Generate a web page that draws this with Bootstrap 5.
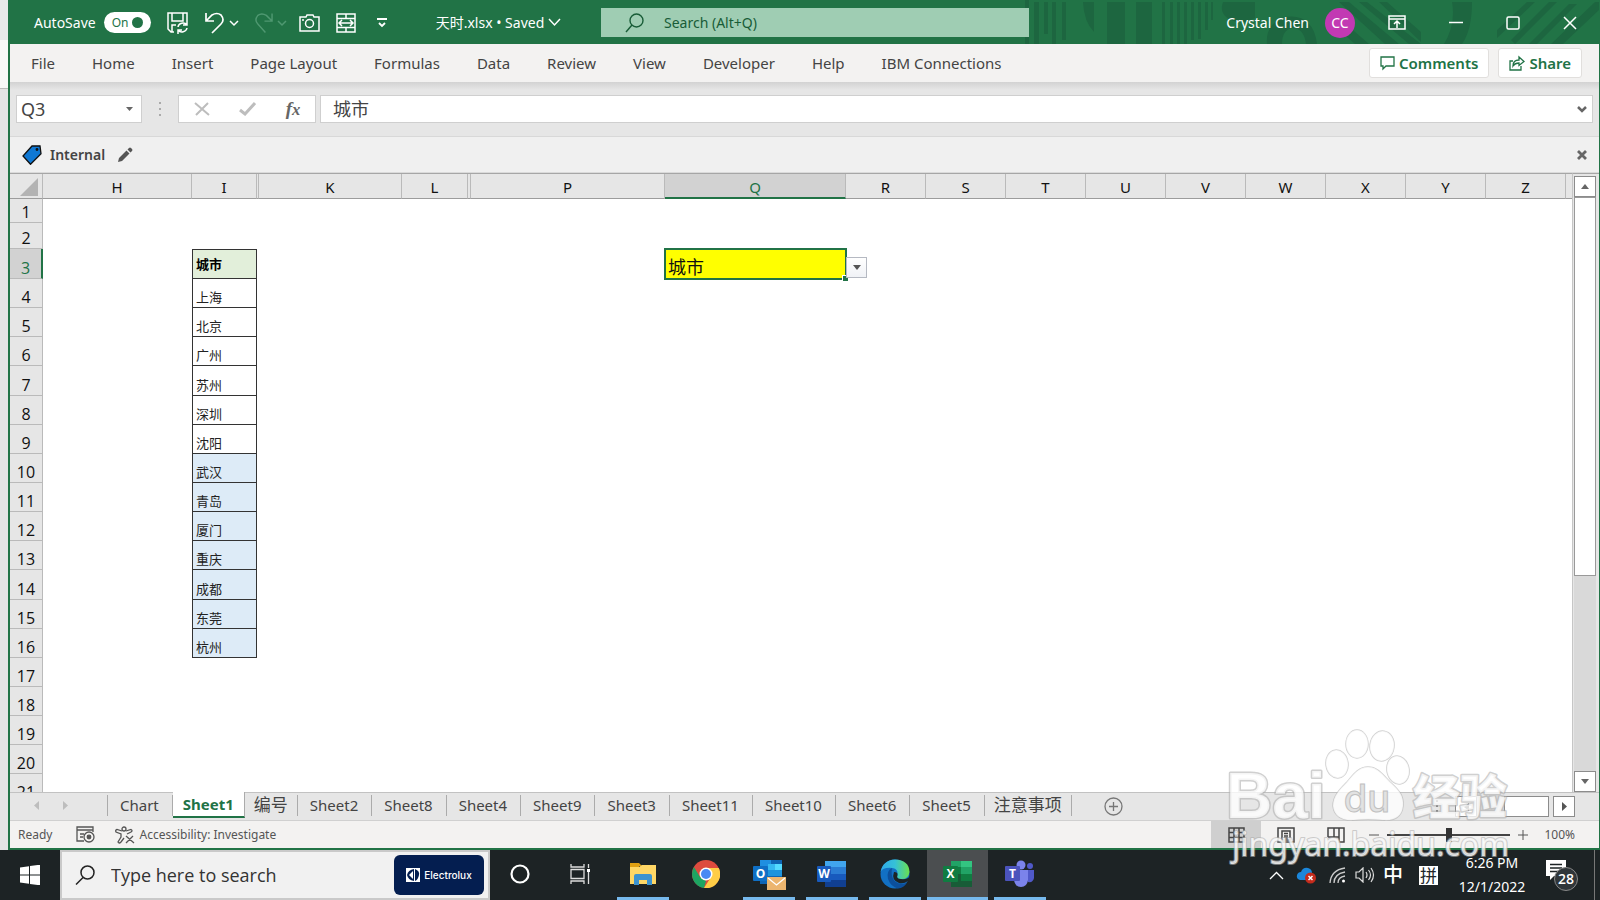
<!DOCTYPE html>
<html lang="en">
<head>
<meta charset="utf-8">
<meta name="viewport" content="width=device-width, initial-scale=1">
<title>天时.xlsx - Excel</title>
<link href="https://cdn.jsdelivr.net/npm/bootstrap@5.3.0/dist/css/bootstrap.min.css" rel="stylesheet">
<style>
:root{--xl:#217346;--ink:#444;--face:#e6e6e6}
body{font-family:"Noto Sans","Noto Sans CJK SC",sans-serif;font-size:15px;line-height:20px;color:var(--ink);background:#e4e4e4}
button,input{font:inherit;color:inherit}
button{background:none;border:0;padding:0;line-height:0}
svg{display:block;flex:none}
a{color:inherit;text-decoration:none}
.behind{width:8px;background:linear-gradient(#e9e9e9 0 40px,#f8f8f8 40px 88px,#bbb 88px 89px,#e4e4e4 89px)}
.xl-window{border:solid var(--xl);border-width:0 1px 2px 2px}
/* title bar */
.titlebar{height:44px;background:var(--xl);color:#fff;font-size:14px}
.titlebar .pattern{right:0;top:0;width:580px;height:44px}
.titlebar>.layer{z-index:1;padding-top:1px}
.quick{width:591px}
.quick .more{margin-left:20px}
.autosave{width:47px;height:21px;border-radius:11px;background:#fff;color:var(--xl);font-size:12px;line-height:21px}
.autosave i{width:11px;height:11px;border-radius:50%;background:var(--xl)}
.find{width:428px;height:29px;background:#9fcdb3;color:#185c37}
.find input,.task-find input,.formula input{background:none;border:0;outline:0;padding:0}
.find input::placeholder{color:#185c37;opacity:1}
.avatar{width:30px;height:30px;border-radius:50%;background:#c239b3}
.controls{gap:43px;margin-left:33px;padding-right:22px}
/* ribbon */
.ribbon{height:38px;background:#f3f2f1;padding:0 17px 0 3px;column-gap:1px}
.ribbon .tab{padding:0 18px}
.ribbon .action{height:30px;background:#fff;border:1px solid #e1dfdd;border-radius:3px;color:var(--xl);font-weight:600;line-height:20px;padding:0 10px}
/* formula bar */
.formula{height:54px;background:linear-gradient(#d2d2d2,#e6e6e6 8px);padding:0 6px;font-size:18px}
.formula .box{height:28px;background:#fff;border:1px solid #cfcfcf}
.fx{font:italic 700 19px/24px "Liberation Serif",serif;color:#666}
.label-bar{height:37px;background:#f0f0f0;border-top:1px solid #d8d8d8;border-bottom:1px solid #dadada;font-weight:600;font-size:14px}
/* grid */
.sheet-pane{background:#fff;border-top:1px solid #a6a6a6;border-right:1px solid #c6c6c6}
.cells{table-layout:fixed;border-collapse:separate;border-spacing:0;width:1563px;color:#111}
.cells th,.cells td{padding:0;overflow:hidden;white-space:nowrap}
.cells th{background:var(--face);font-weight:400;text-align:center;font-size:16px;border-right:1px solid #bababa;border-bottom:1px solid #bababa}
.cells thead th{height:25px;border-bottom-color:#9c9c9c;font-size:15px;padding-top:2px}
.cells tbody th{vertical-align:bottom;line-height:20px;font-family:"Open Sans",sans-serif}
.cells tbody tr{height:29px}
.cells tbody tr.r-first{height:24px}
.cells tbody tr.r-second{height:26px}
.cells tbody tr.r-tall{height:30px}
.cells thead .picked{background:#d2d2d2;color:var(--xl);border-bottom:2px solid var(--xl)}
.cells tbody .picked{background:#d2d2d2;color:var(--xl);border-right:2px solid var(--xl)}
.cells .city{font-size:13px;line-height:20px;vertical-align:bottom;padding-left:3px;border:solid #333;border-width:0 1px 1px;color:#222}
.cells .city-head{background:#e2efda;font-weight:700;border-top-width:1px;vertical-align:middle;color:#000}
.cells .tint{background:#ddebf7}
.cells .active-cell{background:#ff0;outline:2px solid var(--xl);outline-offset:-1px;font-size:18px;line-height:24px;padding-left:3px;vertical-align:bottom;overflow:visible;position:relative}
.handle{right:-2px;bottom:-2px;width:6px;height:6px;background:var(--xl);border:solid #fff;border-width:1px 0 0 1px}
.drop{left:100%;top:8px;width:21px;height:21px;background:linear-gradient(#fff,#f0f2f6);border:1px solid #b5b9c2}
.vscroll{width:26px;background:#e6e6e6;border-top:1px solid #a6a6a6;padding:2px 3px 0 1px}
.arrow-btn{width:22px;height:21px;background:#fff;border:1px solid #8c8c8c}
.vtrack{background:#d9d9d9}
.vthumb{height:66%;background:#fff;border:1px solid #999}
/* sheet tabs */
.tabs{height:29px;background:var(--face);border-top:1px solid #c2c2c2;border-bottom:1px solid #d0d0d0}
.tabs .sheet{padding:0 13px 0 12px;height:21px;line-height:20px;margin-top:2px;border-right:1px solid #ababab;white-space:nowrap}
.tabs .sheet.cjk{padding:0 9px;font-size:17px}
.tabs .sheet.active{height:26px;line-height:24px;margin-top:-1px;background:#fff;border-bottom:2px solid var(--xl);font-weight:700;color:var(--xl);padding:0 10px}
.tabs .lead-in{width:98px;height:21px;margin-top:2px;border-right:1px solid #ababab}
.status{height:27px;background:#f3f2f1;font-size:12px;color:#555}
.view-btn{width:50px;height:27px}
.view-btn.on{background:#cfcfcf}
.zoom-range{-webkit-appearance:none;appearance:none;width:123px;height:16px;background:linear-gradient(#444,#444) center/100% 2px no-repeat}
.zoom-range::-webkit-slider-thumb{-webkit-appearance:none;width:6px;height:14px;background:#333}
/* taskbar */
.taskbar{height:50px;background:#1d2325;color:#fff}
.start{width:60px}
.task-find{width:430px;background:#f1f1f1;border:2px solid #c9c9c9;color:#222;font:18px/24px "Open Sans",sans-serif;padding-left:13px}
.task-find input::placeholder{color:#333;opacity:1}
.brand-chip{width:90px;height:40px;border-radius:6px;background:#041e50;color:#fff;font:500 10px/14px Inter,sans-serif}
.app{width:52px;border-bottom:3px solid transparent;margin-left:11px}
.app.open{border-color:#76b9ed}
.app.front{width:61px;background:#4b4e50}
.app.front,.front+.app{margin-left:6px}
.ime{font-size:20px;font-weight:500}
.ime-mode{font-size:17px;width:19px;line-height:19px}
.clock{font-size:14px;line-height:24px;width:76px}
.show-desk{width:6px;border-left:1px solid #777}
/* watermark */
.stamp{right:50px;bottom:30px;width:330px;height:150px;pointer-events:none;z-index:5}
</style>
</head>
<body>
<div class="vh-100 d-flex flex-column overflow-hidden position-relative">
<div class="d-flex flex-grow-1" style="min-height:0">
<div class="behind flex-shrink-0"></div>
<main class="xl-window flex-grow-1 d-flex flex-column" style="min-width:0">

<header class="titlebar d-flex align-items-center position-relative flex-shrink-0">
 <svg class="pattern position-absolute" viewBox="0 0 580 44" fill="#1d6640">
  <path d="M6 0h4v44H6zM15 2h5v42h-5zM25 2h4v32h-4zM33 2h4v42h-4zM43 2h4v38h-4zM64 2h11v30Q65 22 64 2zM88 2h18v42H88zM117 2h16v42h-16zM143 2h3v42h-3zM151 2h3v42h-3zM158 2h3v42h-3zM165 2h3v42h-3zM172 2h3v38h-3zM179 2h3v37h-3zM186 2h3v28h-3zM192 2h2v18h-2z"/>
  <path d="M204 2h32v16q-14 8-26 1-10-6-6-17z"/>
  <path d="M248 44q-2-20 18-27 28-4 32 27h-11q-2-16-14-16-10 2-10 16z"/>
  <path d="M320 2h10l50 42h-14zM340 2h8l54 42h-12zM360 2h8l34 30v10zM320 18l30 26h-14l-16-14zM433 2h20q0 28-10 42h-18q12-20 8-42zM478 30l30-28h8l-38 36zM492 40l38-38h8l-42 42zM510 44l40-40h8l-40 40zM532 44l44-42h4v8l-36 34z"/>
 </svg>
 <div class="layer quick d-flex align-items-center">
  <span class="ms-4 me-2" id="as-label">AutoSave</span>
  <button class="autosave d-flex align-items-center justify-content-between px-2" role="switch" aria-checked="true" aria-labelledby="as-label">On<i></i></button>
  <button class="ms-3" aria-label="Save"><svg width="22" height="22" viewBox="0 0 22 22" fill="none" stroke="#fff" stroke-width="1.5"><path d="M7 20H4l-3-3V1h19v8M5 1v8h11V1M5 20v-7h4"/><path d="M11 15a5 4.500 0 0 1 9-2M20 9v4h-4M20 16a5 4.500 0 0 1-9 2M11 22v-4h4"/></svg></button>
  <button class="ms-3" aria-label="Undo"><svg width="20" height="22" viewBox="0 0 20 22" fill="none" stroke="#fff" stroke-width="1.700"><path d="M1 1v8h8M1 9l6-6q5-3 9 0 4 5 0 9l-9 9"/></svg></button>
  <button class="ms-1" aria-label="Undo list"><svg width="10" height="8" viewBox="0 0 10 8" fill="none" stroke="#fff" stroke-width="1.500"><path d="M1 2l4 4 4-4"/></svg></button>
  <button class="ms-3" aria-label="Redo" disabled><svg width="18" height="22" viewBox="0 0 19 22" fill="none" stroke="#4f9871" stroke-width="1.500"><path d="M18 1v8h-8M18 9l-6-6q-5-3-9 0-4 5 0 9l8 9"/></svg></button>
  <button class="ms-1" aria-label="Redo list" disabled><svg width="10" height="8" viewBox="0 0 10 8" fill="none" stroke="#4f9871" stroke-width="1.500"><path d="M1 2l4 4 4-4"/></svg></button>
  <button class="ms-2 ps-1" aria-label="Camera"><svg width="21" height="18" viewBox="0 0 21 18" fill="none" stroke="#fff" stroke-width="1.500"><path d="M1 3h6l1-2h6l1 2h5v14H1z"/><circle cx="10.500" cy="9.500" r="4"/><path d="M3 6h2"/></svg></button>
  <button class="ms-3" aria-label="Merge cells"><svg width="20" height="20" viewBox="0 0 20 20" fill="none" stroke="#fff" stroke-width="1.500"><path d="M1 1h18v18H1zM1 5.500h18M1 14.500h18M10 1v4M10 15v4M3 10h14M6 7l-3 3 3 3M14 7l3 3-3 3"/></svg></button>
  <button class="more" aria-label="Customize toolbar"><svg width="12" height="10" viewBox="0 0 12 10" fill="none" stroke="#fff" stroke-width="1.800"><path d="M1 1h10M3 5l3 3 3-3"/></svg></button>
  <button class="ms-5 d-flex align-items-center gap-1" style="line-height:20px">天时.xlsx • Saved <svg width="13" height="9" viewBox="0 0 13 9" fill="none" stroke="#fff" stroke-width="1.500"><path d="M1 1l5.500 6L12 1"/></svg></button>
 </div>
 <label class="layer find d-flex align-items-center ps-4">
  <svg width="19" height="20" viewBox="0 0 19 20" fill="none" stroke="#185c37" stroke-width="1.400"><circle cx="11.500" cy="7.500" r="6.500"/><path d="M7 12l-6 7"/></svg>
  <input class="ms-3 ps-1 flex-grow-1" type="search" placeholder="Search (Alt+Q)" aria-label="Search">
 </label>
 <div class="layer ms-auto d-flex align-items-center">
  <span class="me-3">Crystal Chen</span>
  <span class="avatar d-flex align-items-center justify-content-center">CC</span>
  <div class="controls d-flex align-items-center">
  <button aria-label="Ribbon display"><svg width="18" height="15" viewBox="0 0 18 15" fill="none" stroke="#fff" stroke-width="1.500"><path d="M1 1h16v13H1zM1 4h16M9 13V6M6 9l3-3 3 3"/></svg></button>
  <button aria-label="Minimize"><svg width="14" height="14" viewBox="0 0 14 14" stroke="#fff" stroke-width="1.500"><path d="M0 6.500h14"/></svg></button>
  <button aria-label="Maximize"><svg width="14" height="14" viewBox="0 0 14 14" fill="none" stroke="#fff" stroke-width="1.500"><rect x="1" y="1" width="12" height="12" rx="1.500"/></svg></button>
  <button aria-label="Close"><svg width="14" height="14" viewBox="0 0 14 14" stroke="#fff" stroke-width="1.500"><path d="M1 1l12 12M13 1L1 13"/></svg></button>
  </div>
 </div>
</header>

<nav class="ribbon d-flex align-items-center flex-shrink-0">
 <a class="tab" href="#">File</a><a class="tab" href="#">Home</a><a class="tab" href="#">Insert</a><a class="tab" href="#">Page Layout</a><a class="tab" href="#">Formulas</a><a class="tab" href="#">Data</a><a class="tab" href="#">Review</a><a class="tab" href="#">View</a><a class="tab" href="#">Developer</a><a class="tab" href="#">Help</a><a class="tab" href="#">IBM Connections</a>
 <button class="action ms-auto d-flex align-items-center gap-1"><svg width="15" height="15" viewBox="0 0 15 15" fill="none" stroke="#217346" stroke-width="1.300"><path d="M1 1h13v9H6l-3 3v-3H1z"/></svg>Comments</button>
 <button class="action ms-2 d-flex align-items-center gap-1"><svg width="16" height="16" viewBox="0 0 16 16" fill="none" stroke="#217346" stroke-width="1.300"><path d="M4 6H1v9h11v-4M4 11q0-6 6-6V2l5 4.500-5 4V8q-4 0-6 3z"/></svg>Share</button>
</nav>

<section class="formula d-flex align-items-center flex-shrink-0">
 <div class="box d-flex align-items-center px-2 ps-1" style="width:126px"><input class="flex-grow-1 w-50" value="Q3" aria-label="Name box"><button aria-label="Name list"><svg width="7" height="4" viewBox="0 0 7 4" fill="#666"><path d="M0 0h7L3.500 4z"/></svg></button></div>
 <svg class="mx-3" width="4" height="16" viewBox="0 0 4 16" fill="#aaa"><path d="M1 1h2v2H1zM1 7h2v2H1zM1 13h2v2H1z"/></svg>
 <div class="box d-flex align-items-center justify-content-around" style="width:138px">
  <button aria-label="Cancel"><svg width="16" height="14" viewBox="0 0 16 14" stroke="#bdbdbd" stroke-width="2"><path d="M1 1l14 12M14 1L2 13"/></svg></button>
  <button aria-label="Enter"><svg width="17" height="14" viewBox="0 0 17 14" fill="none" stroke="#bdbdbd" stroke-width="3"><path d="M1 8l5 4L16 1"/></svg></button>
  <button class="fx" aria-label="Insert function">f<small>x</small></button>
 </div>
 <div class="box ms-1 d-flex align-items-center flex-grow-1 ps-2 pe-1"><input class="flex-grow-1 ms-1" value="城市" aria-label="Formula"><button aria-label="Expand formula bar"><svg width="12" height="7" viewBox="0 0 10 7" fill="none" stroke="#666" stroke-width="2.500"><path d="M1 1l4 4 4-4"/></svg></button></div>
</section>

<section class="label-bar d-flex align-items-center px-2 flex-shrink-0">
 <svg class="ms-1" width="20" height="20" viewBox="0 0 20 20" fill="#0f78d4" stroke="#111" stroke-width="1.300"><path d="M10 1l8-.200 1 8L8.500 19.300 1 11z"/><circle cx="15" cy="4.500" r=".8"/></svg>
 <span class="ms-2 me-2">Internal</span>
 <button class="ms-1" aria-label="Edit label"><svg width="16" height="16" viewBox="0 0 16 16" fill="#555"><path d="M1 15l1-4 7.500-7.500 3 3L5 14zM10.500 2.500L12 1q1-1 2 0l1 1q1 1 0 2l-1.500 1.500z"/></svg></button>
 <button class="ms-auto me-1" aria-label="Close label bar"><svg width="10" height="10" viewBox="0 0 10 10" stroke="#666" stroke-width="2.800"><path d="M1 1l8 8M9 1L1 9"/></svg></button>
</section>

<section class="d-flex flex-grow-1" style="min-height:0">
 <div class="sheet-pane flex-grow-1 overflow-hidden" style="min-width:0">
  <table class="cells">
   <colgroup><col style="width:33px"><col style="width:149px"><col style="width:65px"><col style="width:2px"><col style="width:143px"><col style="width:66px"><col style="width:3px"><col style="width:194px"><col style="width:181px"><col span="9" style="width:80px"><col></colgroup>
   <thead><tr><th aria-label="Select all"><svg class="ms-auto me-1" width="18" height="18" viewBox="0 0 18 18" fill="#b3b3b3"><path d="M18 0v18H0z"/></svg></th><th>H</th><th>I</th><th></th><th>K</th><th>L</th><th></th><th>P</th><th class="picked">Q</th><th>R</th><th>S</th><th>T</th><th>U</th><th>V</th><th>W</th><th>X</th><th>Y</th><th>Z</th><th></th></tr></thead>
   <tbody>
   <tr class="r-first"><th>1</th><td colspan="18"></td></tr>
   <tr class="r-second"><th>2</th><td colspan="18"></td></tr>
   <tr class="r-tall"><th class="picked">3</th><td></td><td class="city city-head">城市</td><td colspan="5"></td><td class="active-cell">城市<span class="handle position-absolute"></span><button class="drop position-absolute d-flex align-items-center justify-content-center" aria-label="Choose value"><svg width="8" height="5" viewBox="0 0 8 5" fill="#555"><path d="M0 0h8L4 5z"/></svg></button></td><td colspan="10"></td></tr>
   <tr><th>4</th><td></td><td class="city">上海</td><td colspan="16"></td></tr>
   <tr><th>5</th><td></td><td class="city">北京</td><td colspan="16"></td></tr>
   <tr><th>6</th><td></td><td class="city">广州</td><td colspan="16"></td></tr>
   <tr class="r-tall"><th>7</th><td></td><td class="city">苏州</td><td colspan="16"></td></tr>
   <tr><th>8</th><td></td><td class="city">深圳</td><td colspan="16"></td></tr>
   <tr><th>9</th><td></td><td class="city">沈阳</td><td colspan="16"></td></tr>
   <tr><th>10</th><td></td><td class="city tint">武汉</td><td colspan="16"></td></tr>
   <tr><th>11</th><td></td><td class="city tint">青岛</td><td colspan="16"></td></tr>
   <tr><th>12</th><td></td><td class="city tint">厦门</td><td colspan="16"></td></tr>
   <tr><th>13</th><td></td><td class="city tint">重庆</td><td colspan="16"></td></tr>
   <tr class="r-tall"><th>14</th><td></td><td class="city tint">成都</td><td colspan="16"></td></tr>
   <tr><th>15</th><td></td><td class="city tint">东莞</td><td colspan="16"></td></tr>
   <tr><th>16</th><td></td><td class="city tint">杭州</td><td colspan="16"></td></tr>
   <tr><th>17</th><td colspan="18"></td></tr>
   <tr><th>18</th><td colspan="18"></td></tr>
   <tr><th>19</th><td colspan="18"></td></tr>
   <tr><th>20</th><td colspan="18"></td></tr>
   <tr><th>21</th><td colspan="18"></td></tr>
   </tbody>
  </table>
 </div>
 <div class="vscroll d-flex flex-column flex-shrink-0">
  <button class="arrow-btn d-flex align-items-center justify-content-center" aria-label="Scroll up"><svg width="8" height="5" viewBox="0 0 8 5" fill="#666"><path d="M0 5h8L4 0z"/></svg></button>
  <div class="vtrack flex-grow-1"><div class="vthumb"></div></div>
  <button class="arrow-btn d-flex align-items-center justify-content-center" aria-label="Scroll down"><svg width="8" height="5" viewBox="0 0 8 5" fill="#666"><path d="M0 0h8L4 5z"/></svg></button>
 </div>
</section>

<nav class="tabs d-flex flex-shrink-0">
 <div class="lead-in d-flex align-items-center gap-4 ps-4"><svg width="5" height="9" viewBox="0 0 5 9" fill="#bdbdbd"><path d="M5 0v9L0 4.500z"/></svg><svg width="5" height="9" viewBox="0 0 5 9" fill="#bdbdbd"><path d="M0 0v9l5-4.500z"/></svg></div>
 <a class="sheet" href="#">Chart</a><a class="sheet active" href="#">Sheet1</a><a class="sheet cjk" href="#">编号</a><a class="sheet" href="#">Sheet2</a><a class="sheet" href="#">Sheet8</a><a class="sheet" href="#">Sheet4</a><a class="sheet" href="#">Sheet9</a><a class="sheet" href="#">Sheet3</a><a class="sheet" href="#">Sheet11</a><a class="sheet" href="#">Sheet10</a><a class="sheet" href="#">Sheet6</a><a class="sheet" href="#">Sheet5</a><a class="sheet cjk" href="#">注意事项</a>
 <button class="ms-4 ps-2" aria-label="New sheet"><svg width="19" height="19" viewBox="0 0 19 19" fill="none" stroke="#777" stroke-width="1.300"><circle cx="9.500" cy="9.500" r="8.500"/><path d="M9.500 5v9M5 9.500h9"/></svg></button>
 <div class="ms-auto d-flex align-items-center pe-4">
  <svg class="me-3" width="3" height="13" viewBox="0 0 3 13" fill="#777"><path d="M0 0h2v2H0zM0 5h2v2H0zM0 10h2v2H0z"/></svg>
  <button class="arrow-btn d-flex align-items-center justify-content-center" aria-label="Scroll left"><svg width="5" height="8" viewBox="0 0 5 8" fill="#666"><path d="M5 0v8L0 4z"/></svg></button>
  <div class="vtrack d-flex justify-content-end" style="width:72px"><div class="arrow-btn" style="width:45px"></div></div>
  <button class="arrow-btn ms-1 d-flex align-items-center justify-content-center" aria-label="Scroll right"><svg width="5" height="9" viewBox="0 0 5 9" fill="#555"><path d="M0 0v9l5-4.500z"/></svg></button>
 </div>
</nav>

<footer class="status d-flex align-items-center flex-shrink-0">
 <span class="ms-2 me-4">Ready</span>
 <svg width="19" height="17" viewBox="0 0 19 17" fill="none" stroke="#555" stroke-width="1.300"><path d="M17 6V1H1v14h7M1 4h16M4 8h4M4 11h3"/><circle cx="13" cy="11" r="5"/><circle cx="13" cy="11" r="1.800" fill="#555"/></svg>
 <svg class="ms-3 ps-1 me-1" width="24" height="18" viewBox="0 0 20 18" fill="none" stroke="#555" stroke-width="1.300"><circle cx="9" cy="3" r="2"/><path d="M7 5L2 3.500Q0 4 1 6l5 2v3l-3 5q1 2 3 0l3-4M11 5l5-1.500q2 1 0 2.500l-4 2M11 10l8 7M18 10l-7 7"/></svg>
 <button style="line-height:20px">Accessibility: Investigate</button>
 <div class="ms-auto d-flex align-items-center pe-4">
  <button class="view-btn on d-flex align-items-center justify-content-center" aria-label="Normal view"><svg width="17" height="16" viewBox="0 0 17 16" fill="none" stroke="#444" stroke-width="1.500"><path d="M1 1h15v14H1zM1 5.500h15M1 10.500h15M6 1v14M11 1v14"/></svg></button>
  <button class="view-btn d-flex align-items-center justify-content-center" aria-label="Page layout view"><svg width="18" height="16" viewBox="0 0 18 16" fill="none" stroke="#444" stroke-width="1.500"><path d="M1 1h16v14H1zM5 4h8v9H5zM7 6.500h4M7 9h4M7 11h4"/></svg></button>
  <button class="view-btn d-flex align-items-center justify-content-center" aria-label="Page break view"><svg width="18" height="16" viewBox="0 0 18 16" fill="none" stroke="#444" stroke-width="1.500"><path d="M1 10V1h16v14h-5v-5H1M7 1v9M12 1v9"/></svg></button>
  <button class="ms-2 me-2" aria-label="Zoom out"><svg width="10" height="10" viewBox="0 0 10 10" stroke="#555"><path d="M0 5h10"/></svg></button>
  <input class="zoom-range" type="range" min="0" max="100" value="50" aria-label="Zoom">
  <button class="ms-2 me-3" aria-label="Zoom in"><svg width="10" height="10" viewBox="0 0 10 10" stroke="#555"><path d="M0 5h10M5 0v10"/></svg></button>
  <span>100%</span>
 </div>
</footer>
</main>
</div>

<footer class="taskbar d-flex flex-shrink-0 align-items-stretch">
 <button class="start d-flex align-items-center justify-content-center" aria-label="Start"><svg width="20" height="20" viewBox="0 0 20 20" fill="#fff"><path d="M0 2.500l9-1.300v8.300H0zM10 1l10-1.300v9.800H10zM0 10.500h9v8.300l-9-1.300zM10 10.500h10v9.800L10 19z"/></svg></button>
 <label class="task-find d-flex align-items-center">
  <svg class="me-3" width="20" height="20" viewBox="0 0 20 20" fill="none" stroke="#222" stroke-width="1.500"><circle cx="12.500" cy="7.500" r="6.500"/><path d="M8 12.500l-7 7"/></svg>
  <input class="flex-grow-1 w-50" type="search" placeholder="Type here to search" aria-label="Type here to search">
  <span class="brand-chip d-flex align-items-center justify-content-center gap-1 me-1"><svg width="14" height="14" viewBox="0 0 14 14"><path fill="#fff" d="M0 0h14v14H0z"/><path fill="#041e50" d="M8 1v12Q2 12 1 7 2 2 8 1z"/><path fill="#fff" d="M3 7l4-4v8z"/><path fill="#041e50" d="M9 1q5 2 4 6-1 5-4 6z"/></svg>Electrolux</span>
 </label>
 <button class="app ms-1 d-flex align-items-center justify-content-center" aria-label="Cortana"><svg width="20" height="20" viewBox="0 0 20 20" fill="none" stroke="#fff" stroke-width="2.200"><circle cx="10" cy="10" r="8.500"/></svg></button>
 <button class="app ms-2 d-flex align-items-center justify-content-center" aria-label="Task view"><svg width="21" height="20" viewBox="0 0 21 20" fill="none" stroke="#ddd" stroke-width="1.300"><path d="M1 0v3h13V0M1 20v-3h13v3M1 5.500h13v9H1zM18.500 0v4M18.500 8v12"/><path d="M17 5h3v3h-3z" fill="#fff" stroke="none"/></svg></button>
 <button class="app open d-flex align-items-center justify-content-center" aria-label="File Explorer"><svg width="28" height="24" viewBox="0 0 28 24"><path fill="#e0a013" d="M1 1h9l3 3h-3v4H1z"/><path fill="#ffd766" d="M1 5h9l3-2h14v19H1z"/><path fill="#3d93d0" d="M5 23V14q0-2 2-2h14q2 0 2 2v9h-5v-5h-8v5z"/></svg></button>
 <button class="app d-flex align-items-center justify-content-center" aria-label="Chrome"><svg width="28" height="28" viewBox="0 0 28 28"><circle cx="14" cy="14" r="14" fill="#dd4b3e"/><path fill="#1da462" d="M2 7l6 10 6 4-2 7A14 14 0 0 1 2 7z"/><path fill="#ffcd46" d="M14 8h12.700A14 14 0 0 1 12 28l7-11z"/><circle cx="14" cy="14" r="6.500" fill="#fff"/><circle cx="14" cy="14" r="5" fill="#4a8af4"/></svg></button>
 <button class="app open d-flex align-items-center justify-content-center" aria-label="Outlook"><svg width="34" height="32" viewBox="0 0 34 32"><path fill="#0f64b4" d="M8 2h22v24H8z"/><path fill="#1f8fe0" d="M8 2h11v7H8z"/><path fill="#35b8f1" d="M16 6h7v6h-7z"/><path fill="#54daff" d="M23 6h7v6h-7z"/><path fill="#1d93dc" d="M16 12h14v6H16z"/><rect x="1" y="8" width="15" height="15" rx="1" fill="#0f6fc5"/><text x="8.500" y="20" fill="#fff" font-family="Open Sans" font-weight="700" font-size="12" text-anchor="middle">O</text><path fill="#ecb56f" d="M15 19h19v13H15z"/><path fill="none" stroke="#fff" stroke-width="1.300" d="M16 20l8.500 7 8.500-7"/></svg></button>
 <button class="app open d-flex align-items-center justify-content-center" aria-label="Word"><svg width="30" height="28" viewBox="0 0 30 28"><path fill="#41a5ee" d="M8 1h21v7H8z"/><path fill="#2b7cd3" d="M8 7h21v7H8z"/><path fill="#185abd" d="M8 14h21v7H8z"/><path fill="#103f91" d="M8 20h21v7H8z"/><rect y="6" width="14" height="16" rx="1" fill="#185abd"/><text x="7" y="18" fill="#fff" font-family="Open Sans" font-weight="700" font-size="12" text-anchor="middle">W</text></svg></button>
 <button class="app open d-flex align-items-center justify-content-center" aria-label="Edge"><svg width="30" height="30" viewBox="0 0 30 30"><defs><linearGradient id="edge-top"><stop offset="0" stop-color="#2fa8e8"/><stop offset=".5" stop-color="#35c1d8"/><stop offset="1" stop-color="#6be04e"/></linearGradient></defs><circle cx="15" cy="15" r="14.500" fill="#1270c4"/><path fill="url(#edge-top)" d="M.500 13Q3 1 15 .500 29 1 29.500 13q-1 8-9 7-5 0-3-4 1-6-5-7Q3 8 .500 13z"/><path fill="#0c4f9c" d="M12 9q-6 3-4 11 3 8 10 9.500 6-.5 9-6-3 2-8 1-9-3-7-15.500z"/><path fill="#1d2325" d="M14 13q-3 8 5 11 5 1 9-2l2 1v-6q-3 4-9 3-5 0-3.500-4 .5-3-3.500-3z"/></svg></button>
 <button class="app open front d-flex align-items-center justify-content-center" aria-label="Excel"><svg width="30" height="28" viewBox="0 0 30 28"><path fill="#21a366" d="M8 1h11v7H8z"/><path fill="#33c481" d="M18 1h11v7H18z"/><path fill="#107c41" d="M8 7h11v7H8z"/><path fill="#21a366" d="M18 7h11v7H18z"/><path fill="#185c37" d="M8 14h21v13H8z"/><path fill="#107c41" d="M18 14h11v7H18z"/><rect y="6" width="15" height="16" rx="1" fill="#107c41"/><text x="7.500" y="18" fill="#fff" font-family="Open Sans" font-weight="700" font-size="12" text-anchor="middle">X</text></svg></button>
 <button class="app open d-flex align-items-center justify-content-center" aria-label="Teams"><svg width="31" height="28" viewBox="0 0 31 28"><circle cx="16" cy="5" r="4.500" fill="#7b83eb"/><circle cx="25" cy="6" r="3" fill="#5059c9"/><path fill="#5059c9" d="M20 10h9v8q-1 5-6 4z"/><path fill="#7b83eb" d="M9 10h14v10q-1 7-7 7t-7-7z"/><rect y="6" width="15" height="15" rx="1" fill="#4b53bc"/><text x="7.500" y="18" fill="#fff" font-family="Open Sans" font-weight="700" font-size="12" text-anchor="middle">T</text></svg></button>

 <div class="ms-auto d-flex align-items-center gap-2">
  <button class="me-1" aria-label="Hidden icons"><svg width="15" height="9" viewBox="0 0 15 9" fill="none" stroke="#fff" stroke-width="1.300"><path d="M1 8l6.500-6.500L14 8"/></svg></button>
  <svg width="21" height="18" viewBox="0 0 21 18"><path fill="#1b86da" d="M4 14q-4-1-3-5 1-3 4-3 2-5 7-4 4 1 4 5v7z"/><circle cx="14.500" cy="12" r="5.500" fill="#c42b1c"/><path stroke="#fff" stroke-width="1.500" d="M12.500 10l4 4M16.500 10l-4 4"/></svg>
  <svg class="ms-1" width="18" height="18" viewBox="0 0 18 18" fill="none" stroke="#ccc" stroke-width="1.300"><path d="M1 17Q2 4 16 2M5 17q0-9 11-11M9 17q0-6 7-7"/><circle cx="14.500" cy="15" r="1.500" fill="#fff" stroke="none"/></svg>
  <svg width="20" height="16" viewBox="0 0 20 16" fill="none" stroke="#ddd" stroke-width="1.200"><path d="M1 5h3l4-4v14l-4-4H1zM11 5q2 3 0 6M13.500 3q4 5 0 10M16 1q5 7 0 14"/></svg>
  <span class="ime">中</span>
  <span class="ime-mode ms-2 bg-white text-dark text-center">拼</span>
  <div class="clock text-center ms-2">6:26 PM<br>12/1/2022</div>
  <button class="ms-2 me-2" aria-label="Notifications"><svg width="32" height="32" viewBox="0 0 32 32"><path fill="#fff" d="M0 1h20v16H8l-4 4v-4H0z"/><path stroke="#1d2325" stroke-width="1.500" d="M4 5.500h12M4 9h12M4 12.500h9"/><circle cx="20" cy="20" r="11.500" fill="#30363a" stroke="#888"/><text x="20" y="25" text-anchor="middle" fill="#fff" font-family="Open Sans" font-weight="600" font-size="14">28</text></svg></button>
  <span class="show-desk align-self-stretch"></span>
 </div>
</footer>

<svg class="stamp position-absolute" viewBox="-20 0 330 150" aria-hidden="true">
 <g fill="#fff" fill-opacity=".78" stroke="#b0b0b0" stroke-opacity=".6" stroke-width="1.500" paint-order="stroke" stroke-linejoin="round">
  <ellipse cx="117" cy="24" rx="11" ry="14"/>
  <ellipse cx="142" cy="26" rx="12" ry="15" transform="rotate(8 142 26)"/>
  <ellipse cx="97" cy="44" rx="11" ry="14" transform="rotate(-8 97 44)"/>
  <ellipse cx="158" cy="50" rx="11" ry="14" transform="rotate(-12 158 50)"/>
  <path d="M128 47c10 0 15 8 22 15 9 8 14 14 13 24-1 11-9 15-20 14-10-1-20-1-29 0-12 1-20-4-21-14 0-10 7-17 14-24 6-7 11-15 21-15z"/>
  <text x="-14" y="98" font-family="Liberation Sans,sans-serif" font-weight="700" font-size="64" stroke-width="3">Bai</text>
  <text x="173" y="94" font-family="Noto Sans CJK SC,sans-serif" font-weight="900" font-size="47" stroke-width="3">经验</text>
  <text x="-8" y="136" font-family="Noto Sans,sans-serif" font-size="32" stroke-width="2">jingyan.baidu.com</text>
 </g>
 <text x="127" y="92" text-anchor="middle" font-family="Inter,sans-serif" font-weight="500" font-size="38" fill="#e2e2e2" stroke="#c0c0c0" stroke-width="1">du</text>
</svg>
</div>
<script src="https://cdn.jsdelivr.net/npm/bootstrap@5.3.0/dist/js/bootstrap.bundle.min.js"></script>
</body>
</html>
